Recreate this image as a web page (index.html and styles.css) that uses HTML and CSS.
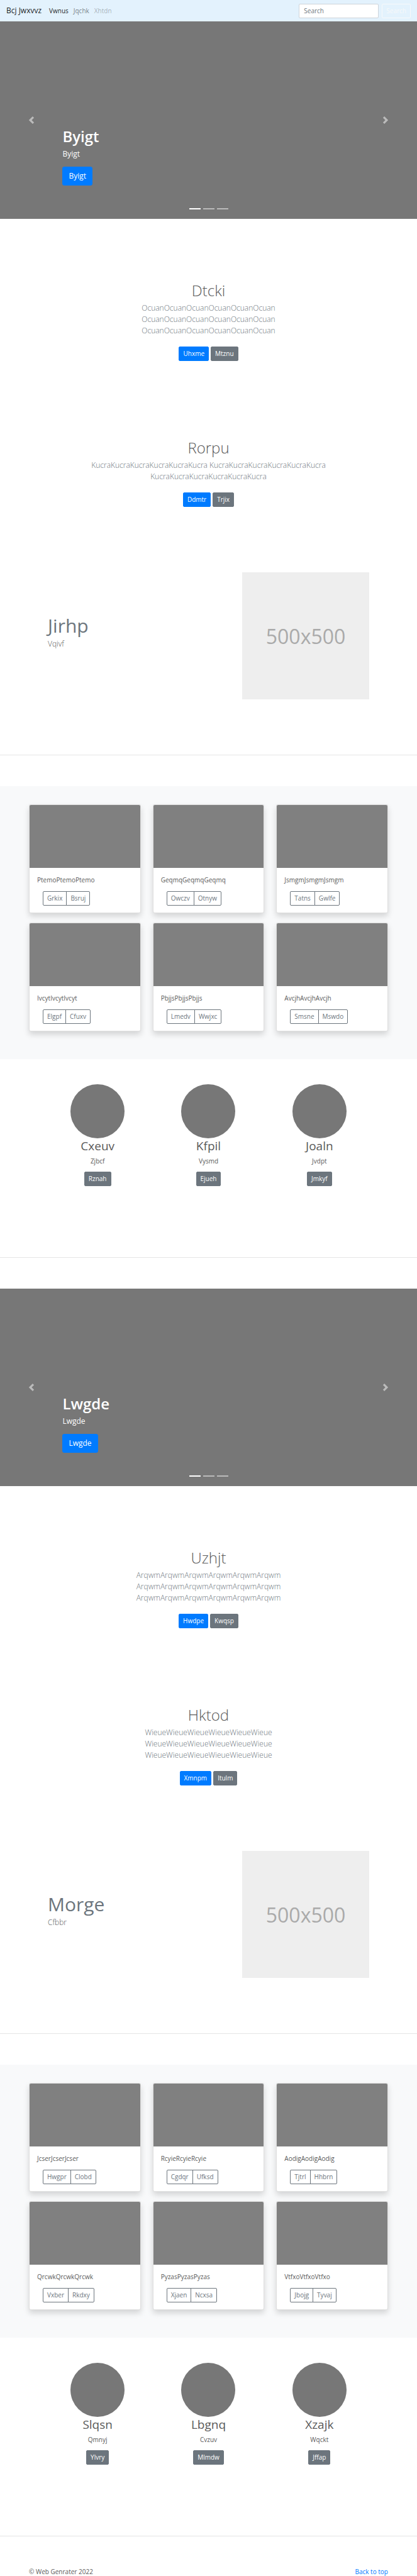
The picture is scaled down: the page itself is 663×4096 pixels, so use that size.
FILE: index.html
```html
<!DOCTYPE html>
<html lang="en">
<head>
<meta charset="utf-8">
<title>Bcj Jwxvvz</title>
<meta name="viewport" content="width=device-width, initial-scale=1">
<link rel="stylesheet" href="styles.css">
</head>
<body id="top">
<header class="navbar">
  <a class="brand" href="#top">Bcj Jwxvvz</a>
  <nav class="nav-links">
    <a class="nav-link active" href="#top">Vwnus</a>
    <a class="nav-link" href="#top">Jqchk</a>
    <a class="nav-link disabled" href="#top" aria-disabled="true">Xhtdn</a>
  </nav>
  <form class="search">
    <input class="search-input" type="search" placeholder="Search" aria-label="Search">
    <button class="btn btn-outline-light" type="button">Search</button>
  </form>
</header>

<main>
  <section class="carousel">
    <div class="caption">
      <h1 class="caption-title">Byigt</h1>
      <p class="caption-text">Byigt</p>
      <a class="btn btn-primary btn-lg" href="#top">Byigt</a>
    </div>
    <button class="control prev" type="button" aria-label="Previous"><svg class="chevron" viewBox="0 0 8 8"><path d="M5.25 0l-4 4 4 4 1.5-1.5L4.25 4l2.5-2.5L5.25 0z"/></svg></button>
    <button class="control next" type="button" aria-label="Next"><svg class="chevron" viewBox="0 0 8 8"><path d="M2.75 0l-1.5 1.5L3.75 4l-2.5 2.5L2.75 8l4-4-4-4z"/></svg></button>
    <div class="indicators"><span class="indicator current"></span><span class="indicator"></span><span class="indicator"></span></div>
  </section>

  <section class="jumbotron">
    <h2 class="jumbo-title">Dtcki</h2>
    <p class="jumbo-text">OcuanOcuanOcuanOcuanOcuanOcuan OcuanOcuanOcuanOcuanOcuanOcuan OcuanOcuanOcuanOcuanOcuanOcuan</p>
    <div class="actions"><a class="btn btn-primary" href="#top">Uhxme</a><a class="btn btn-secondary" href="#top">Mtznu</a></div>
  </section>
  <section class="jumbotron">
    <h2 class="jumbo-title">Rorpu</h2>
    <p class="jumbo-text">KucraKucraKucraKucraKucraKucra KucraKucraKucraKucraKucraKucra KucraKucraKucraKucraKucraKucra</p>
    <div class="actions"><a class="btn btn-primary" href="#top">Ddmtr</a><a class="btn btn-secondary" href="#top">Trjix</a></div>
  </section>

  <section class="featurette">
    <div class="feature-copy">
      <h2 class="feature-title">Jirhp</h2>
      <p class="feature-text">Vqivf</p>
    </div>
    <div class="placeholder">500x500</div>
  </section>
  <hr class="divider">

  <section class="album">
    <article class="card"><div class="card-image"></div><div class="card-body"><p class="card-text">PtemoPtemoPtemo</p><div class="btn-group"><button class="btn btn-outline" type="button">Grkix</button><button class="btn btn-outline" type="button">Bsruj</button></div></div></article>
    <article class="card"><div class="card-image"></div><div class="card-body"><p class="card-text">GeqmqGeqmqGeqmq</p><div class="btn-group"><button class="btn btn-outline" type="button">Owczv</button><button class="btn btn-outline" type="button">Otnyw</button></div></div></article>
    <article class="card"><div class="card-image"></div><div class="card-body"><p class="card-text">JsmgmJsmgmJsmgm</p><div class="btn-group"><button class="btn btn-outline" type="button">Tatns</button><button class="btn btn-outline" type="button">Gwlfe</button></div></div></article>
    <article class="card"><div class="card-image"></div><div class="card-body"><p class="card-text">IvcytIvcytIvcyt</p><div class="btn-group"><button class="btn btn-outline" type="button">Elgpf</button><button class="btn btn-outline" type="button">Cfuxv</button></div></div></article>
    <article class="card"><div class="card-image"></div><div class="card-body"><p class="card-text">PbjjsPbjjsPbjjs</p><div class="btn-group"><button class="btn btn-outline" type="button">Lmedv</button><button class="btn btn-outline" type="button">Wwjxc</button></div></div></article>
    <article class="card"><div class="card-image"></div><div class="card-body"><p class="card-text">AvcjhAvcjhAvcjh</p><div class="btn-group"><button class="btn btn-outline" type="button">Smsne</button><button class="btn btn-outline" type="button">Mswdo</button></div></div></article>
  </section>

  <section class="team">
    <div class="member"><div class="avatar"></div><h2 class="member-name">Cxeuv</h2><p class="member-text">Zjbcf</p><a class="btn btn-secondary" href="#top">Rznah</a></div>
    <div class="member"><div class="avatar"></div><h2 class="member-name">Kfpil</h2><p class="member-text">Vysmd</p><a class="btn btn-secondary" href="#top">Ejueh</a></div>
    <div class="member"><div class="avatar"></div><h2 class="member-name">Joaln</h2><p class="member-text">Jvdpt</p><a class="btn btn-secondary" href="#top">Jmkyf</a></div>
  </section>
  <hr class="divider">

  <section class="carousel">
    <div class="caption">
      <h1 class="caption-title">Lwgde</h1>
      <p class="caption-text">Lwgde</p>
      <a class="btn btn-primary btn-lg" href="#top">Lwgde</a>
    </div>
    <button class="control prev" type="button" aria-label="Previous"><svg class="chevron" viewBox="0 0 8 8"><path d="M5.25 0l-4 4 4 4 1.5-1.5L4.25 4l2.5-2.5L5.25 0z"/></svg></button>
    <button class="control next" type="button" aria-label="Next"><svg class="chevron" viewBox="0 0 8 8"><path d="M2.75 0l-1.5 1.5L3.75 4l-2.5 2.5L2.75 8l4-4-4-4z"/></svg></button>
    <div class="indicators"><span class="indicator current"></span><span class="indicator"></span><span class="indicator"></span></div>
  </section>

  <section class="jumbotron">
    <h2 class="jumbo-title">Uzhjt</h2>
    <p class="jumbo-text">ArqwmArqwmArqwmArqwmArqwmArqwm ArqwmArqwmArqwmArqwmArqwmArqwm ArqwmArqwmArqwmArqwmArqwmArqwm</p>
    <div class="actions"><a class="btn btn-primary" href="#top">Hwdpe</a><a class="btn btn-secondary" href="#top">Kwqsp</a></div>
  </section>
  <section class="jumbotron">
    <h2 class="jumbo-title">Hktod</h2>
    <p class="jumbo-text">WieueWieueWieueWieueWieueWieue WieueWieueWieueWieueWieueWieue WieueWieueWieueWieueWieueWieue</p>
    <div class="actions"><a class="btn btn-primary" href="#top">Xmnpm</a><a class="btn btn-secondary" href="#top">Itulm</a></div>
  </section>

  <section class="featurette">
    <div class="feature-copy">
      <h2 class="feature-title">Morge</h2>
      <p class="feature-text">Cfbbr</p>
    </div>
    <div class="placeholder">500x500</div>
  </section>
  <hr class="divider">

  <section class="album">
    <article class="card"><div class="card-image"></div><div class="card-body"><p class="card-text">JcserJcserJcser</p><div class="btn-group"><button class="btn btn-outline" type="button">Hwgpr</button><button class="btn btn-outline" type="button">Clobd</button></div></div></article>
    <article class="card"><div class="card-image"></div><div class="card-body"><p class="card-text">RcyieRcyieRcyie</p><div class="btn-group"><button class="btn btn-outline" type="button">Cgdqr</button><button class="btn btn-outline" type="button">Ufksd</button></div></div></article>
    <article class="card"><div class="card-image"></div><div class="card-body"><p class="card-text">AodigAodigAodig</p><div class="btn-group"><button class="btn btn-outline" type="button">Tjtrl</button><button class="btn btn-outline" type="button">Hhbrn</button></div></div></article>
    <article class="card"><div class="card-image"></div><div class="card-body"><p class="card-text">QrcwkQrcwkQrcwk</p><div class="btn-group"><button class="btn btn-outline" type="button">Vxber</button><button class="btn btn-outline" type="button">Rkdxy</button></div></div></article>
    <article class="card"><div class="card-image"></div><div class="card-body"><p class="card-text">PyzasPyzasPyzas</p><div class="btn-group"><button class="btn btn-outline" type="button">Xjaen</button><button class="btn btn-outline" type="button">Ncxsa</button></div></div></article>
    <article class="card"><div class="card-image"></div><div class="card-body"><p class="card-text">VtfxoVtfxoVtfxo</p><div class="btn-group"><button class="btn btn-outline" type="button">Jbojg</button><button class="btn btn-outline" type="button">Tyvaj</button></div></div></article>
  </section>

  <section class="team">
    <div class="member"><div class="avatar"></div><h2 class="member-name">Slqsn</h2><p class="member-text">Qmnyj</p><a class="btn btn-secondary" href="#top">Ylvry</a></div>
    <div class="member"><div class="avatar"></div><h2 class="member-name">Lbgnq</h2><p class="member-text">Cvzuv</p><a class="btn btn-secondary" href="#top">Mlmdw</a></div>
    <div class="member"><div class="avatar"></div><h2 class="member-name">Xzajk</h2><p class="member-text">Wqckt</p><a class="btn btn-secondary" href="#top">Jffap</a></div>
  </section>
  <hr class="divider">
</main>

<footer class="footer">
  <span>© Web Genrater 2022</span>
  <a class="back-link" href="#top">Back to top</a>
</footer>
</body>
</html>
```
FILE: styles.css
```css
*, *::before, *::after { box-sizing: border-box; }

body {
  margin: 0;
  background: #fff;
  color: #5a5a5a;
  font-family: "Open Sans", "Noto Sans", sans-serif;
  font-size: 10px;
  line-height: 15px;
}

h1, h2, p { margin: 0; }
a { text-decoration: none; }

/* Buttons */
.btn {
  display: inline-block;
  padding: 3px 6px;
  border: 1px solid transparent;
  border-radius: 2px;
  background: transparent;
  color: #fff;
  font-family: inherit;
  font-size: 10px;
  line-height: 15px;
  text-align: center;
}
.btn-primary { background: #007bff; border-color: #007bff; }
.btn-secondary { background: #6c757d; border-color: #6c757d; }
.btn-outline { border-color: #6c757d; color: #6c757d; }
.btn-outline-light { border-color: #f8f9fa; color: #f8f9fa; }
.btn-lg { padding: 5px 9px; border-radius: 3px; font-size: 12px; line-height: 18px; }

/* Navigation */
.navbar {
  display: flex;
  align-items: center;
  min-height: 34px;
  padding: 5px 10px;
  background: #e3f2fd;
}
.brand { margin-right: 8px; color: rgba(0, 0, 0, .9); font-size: 12px; line-height: 18px; }
.nav-links { display: flex; flex: 1; }
.nav-link { padding: 0 4px; color: rgba(0, 0, 0, .5); }
.nav-link.active { color: rgba(0, 0, 0, .9); }
.nav-link.disabled { color: rgba(0, 0, 0, .3); }
.search { display: flex; gap: 5px; }
.search-input {
  width: 127px;
  padding: 3px 7px;
  border: 1px solid #ced4da;
  border-radius: 2px;
  background: #fff;
  color: #495057;
  font-family: inherit;
  font-size: 10px;
  line-height: 15px;
}
.search-input::placeholder { color: #6c757d; opacity: 1; }

/* Carousel */
.carousel {
  position: relative;
  display: flex;
  align-items: flex-end;
  min-height: 314px;
  margin-bottom: 40px;
  padding: 0 15% 53px;
  background: #777;
  color: #fff;
}
.caption-title { margin-bottom: 5px; font-size: 24px; font-weight: 600; line-height: 29px; }
.caption-text { margin-bottom: 11px; font-size: 12px; line-height: 18px; }
.caption .btn { display: inline-block; vertical-align: top; }
.control {
  position: absolute;
  top: 0;
  bottom: 0;
  display: flex;
  align-items: center;
  justify-content: center;
  width: 15%;
  padding: 0;
  border: 0;
  background: none;
  opacity: .5;
}
.prev { left: 0; }
.next { right: 0; }
.chevron { width: 12px; height: 12px; fill: #fff; }
.indicators {
  position: absolute;
  right: 0;
  bottom: 15px;
  left: 0;
  display: flex;
  justify-content: center;
  gap: 4px;
}
.indicator { width: 18px; height: 2px; background: #fff; opacity: .5; }
.indicator.current { opacity: 1; }

/* Jumbotron */
.jumbotron { padding: 59px 10px 64px; text-align: center; }
.jumbo-title { margin-bottom: 5px; font-size: 24px; font-weight: 300; line-height: 29px; }
.jumbo-text {
  max-width: 374px;
  margin: 0 auto 16px;
  color: #6c757d;
  font-size: 12px;
  font-weight: 300;
  line-height: 18px;
}
.actions { display: flex; justify-content: center; gap: 3px; }

/* Featurette */
.featurette {
  display: flex;
  align-items: center;
  justify-content: space-between;
  padding: 40px 76px 88px;
}
.feature-title { margin-bottom: 5px; color: #6c757d; font-size: 30px; font-weight: 400; line-height: 30px; }
.feature-text { margin-bottom: 10px; font-size: 12px; font-weight: 300; line-height: 18px; }
.placeholder {
  display: flex;
  align-items: center;
  justify-content: center;
  width: 202px;
  aspect-ratio: 1;
  background: #eee;
  color: #aaa;
  font-size: 32px;
}
.divider { margin: 0 0 49px; border: 0; border-top: 1px solid #e5e5e5; }

/* Album */
.album {
  display: grid;
  grid-template-columns: repeat(3, 1fr);
  gap: 15px 19px;
  padding: 29px 46px 44px;
  background: #f8f9fa;
}
.card {
  overflow: hidden;
  border: 1px solid rgba(0, 0, 0, .125);
  border-radius: 3px;
  background: #fff;
  box-shadow: 0 5px 10px rgba(0, 0, 0, .15);
}
.card-image { height: 100px; background: #808080; }
.card-body { padding: 12px 12px 11px; }
.card-text { margin-bottom: 10px; }
.btn-group { display: flex; padding-left: 9px; }
.btn-group .btn:first-child { border-radius: 2px 0 0 2px; }
.btn-group .btn:last-child { margin-left: -1px; border-radius: 0 2px 2px 0; }

/* Team */
.team {
  display: grid;
  grid-template-columns: repeat(3, 1fr);
  padding: 40px 67px 113px;
}
.member { display: flex; flex-direction: column; align-items: center; }
.avatar { width: 86px; height: 86px; border-radius: 50%; background: #777; }
.member-name { margin-bottom: 5px; font-size: 19px; font-weight: 400; line-height: 24px; }
.member-text { margin-bottom: 9px; }

/* Footer */
.footer {
  display: flex;
  justify-content: space-between;
  padding: 0 46px;
  line-height: 14px;
}
.back-link { color: #007bff; }
```
